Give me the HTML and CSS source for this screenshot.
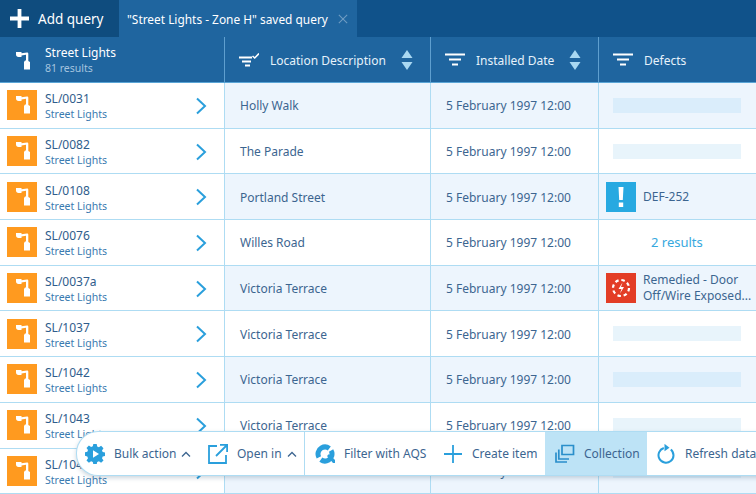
FILE: index.html
```html
<!DOCTYPE html>
<html lang="en">
<head>
<meta charset="utf-8">
<title>Street Lights</title>
<link rel="stylesheet" href="styles.css">
</head>
<body>
<svg class="defs" width="0" height="0" aria-hidden="true">
  <defs>
    <symbol id="lamp" viewBox="0 0 30 30">
      <path d="M9 6h5.500v1.200L20 6.500c.8 0 1.300.5 1.300 1.300V15h-2.300V8.800l-4.500.7V11H11.500C10 11 9 10 9 8.500z" fill="currentColor"/>
      <path d="M18 14.500h2.500l2.500 1.500v7.500h-6V16z" fill="currentColor"/>
    </symbol>
    <symbol id="filter" viewBox="0 0 20 14">
      <path d="M0 1.500h20M4 6.500h12M7 11.500h6" stroke="currentColor" stroke-width="1.800" fill="none"/>
    </symbol>
    <symbol id="sort" viewBox="0 0 12 20">
      <path d="M6 0l5.500 8H.5zM6 20L.5 12h11z" fill="currentColor"/>
    </symbol>
    <symbol id="chev" viewBox="0 0 12 18">
      <path d="M2 1.500L10 9l-8 7.500" fill="none" stroke="currentColor" stroke-width="2"/>
    </symbol>
    <symbol id="up" viewBox="0 0 10 6">
      <path d="M1 5.500L5 1.500l4 4" fill="none" stroke="currentColor" stroke-width="1.300"/>
    </symbol>
  </defs>
</svg>

<div class="app">
  <nav class="tabs">
    <button class="add">
      <svg class="add-icon" viewBox="0 0 20 20"><path d="M10 0v20M0 10h20" stroke="currentColor" stroke-width="4"/></svg>
      Add query
    </button>
    <div class="tab">
      <span>"Street Lights - Zone H" saved query</span>
      <svg class="tab-close" viewBox="0 0 12 12"><path d="M1 1l10 10M11 1L1 11" stroke="currentColor" stroke-width="1.300"/></svg>
    </div>
  </nav>

  <header class="row head">
    <div class="cell first-head">
      <svg class="head-lamp"><use href="#lamp"/></svg>
      <div class="title-stack">
        <span class="title">Street Lights</span>
        <span class="sub">81 results</span>
      </div>
    </div>
    <div class="cell hcell">
      <svg class="ficon" viewBox="0 0 20 14"><path d="M0 4.500h13M3 8.500h9M6 12.500h5" stroke="currentColor" stroke-width="1.800" fill="none"/><path d="M13.500 3l2.200 2L20 .5" stroke="currentColor" stroke-width="1.600" fill="none"/></svg>
      <span class="hlabel">Location Description</span>
      <svg class="sort"><use href="#sort"/></svg>
    </div>
    <div class="cell hcell">
      <svg class="ficon"><use href="#filter"/></svg>
      <span class="hlabel">Installed Date</span>
      <svg class="sort"><use href="#sort"/></svg>
    </div>
    <div class="cell hcell">
      <svg class="ficon"><use href="#filter"/></svg>
      <span class="hlabel">Defects</span>
    </div>
  </header>

  <main class="rows">
    <div class="row odd">
      <div class="cell item"><span class="badge"><svg><use href="#lamp"/></svg></span><div class="id-stack"><span class="id">SL/0031</span><span class="type">Street Lights</span></div><svg class="chev"><use href="#chev"/></svg></div>
      <div class="cell text">Holly Walk</div><div class="cell text">5 February 1997 12:00</div>
      <div class="cell defect"><span class="loading"></span></div>
    </div>
    <div class="row">
      <div class="cell item"><span class="badge"><svg><use href="#lamp"/></svg></span><div class="id-stack"><span class="id">SL/0082</span><span class="type">Street Lights</span></div><svg class="chev"><use href="#chev"/></svg></div>
      <div class="cell text">The Parade</div><div class="cell text">5 February 1997 12:00</div>
      <div class="cell defect"><span class="loading"></span></div>
    </div>
    <div class="row odd">
      <div class="cell item"><span class="badge"><svg><use href="#lamp"/></svg></span><div class="id-stack"><span class="id">SL/0108</span><span class="type">Street Lights</span></div><svg class="chev"><use href="#chev"/></svg></div>
      <div class="cell text">Portland Street</div><div class="cell text">5 February 1997 12:00</div>
      <div class="cell defect found">
        <span class="dbadge blue"><svg viewBox="0 0 30 30"><path d="M12.500 5h5l-.7 13h-3.600zM12.800 20.500h4.400V25h-4.400z" fill="#fff"/></svg></span>
        <span class="dtext">DEF-252</span>
      </div>
    </div>
    <div class="row">
      <div class="cell item"><span class="badge"><svg><use href="#lamp"/></svg></span><div class="id-stack"><span class="id">SL/0076</span><span class="type">Street Lights</span></div><svg class="chev"><use href="#chev"/></svg></div>
      <div class="cell text">Willes Road</div><div class="cell text">5 February 1997 12:00</div>
      <div class="cell defect results">2 results</div>
    </div>
    <div class="row odd">
      <div class="cell item"><span class="badge"><svg><use href="#lamp"/></svg></span><div class="id-stack"><span class="id">SL/0037a</span><span class="type">Street Lights</span></div><svg class="chev"><use href="#chev"/></svg></div>
      <div class="cell text">Victoria Terrace</div><div class="cell text">5 February 1997 12:00</div>
      <div class="cell defect found">
        <span class="dbadge red"><svg viewBox="0 0 30 30"><circle cx="15" cy="15" r="8" fill="none" stroke="#fff" stroke-width="2.200" stroke-dasharray="3.500 2.800"/><path d="M16.500 9.500l-4 6.500h3l-1.500 4.500 4-6.500h-3z" fill="#fff"/></svg></span>
        <span class="dtext">Remedied - Door Off/Wire Exposed...</span>
      </div>
    </div>
    <div class="row">
      <div class="cell item"><span class="badge"><svg><use href="#lamp"/></svg></span><div class="id-stack"><span class="id">SL/1037</span><span class="type">Street Lights</span></div><svg class="chev"><use href="#chev"/></svg></div>
      <div class="cell text">Victoria Terrace</div><div class="cell text">5 February 1997 12:00</div>
      <div class="cell defect"><span class="loading"></span></div>
    </div>
    <div class="row odd">
      <div class="cell item"><span class="badge"><svg><use href="#lamp"/></svg></span><div class="id-stack"><span class="id">SL/1042</span><span class="type">Street Lights</span></div><svg class="chev"><use href="#chev"/></svg></div>
      <div class="cell text">Victoria Terrace</div><div class="cell text">5 February 1997 12:00</div>
      <div class="cell defect"><span class="loading"></span></div>
    </div>
    <div class="row">
      <div class="cell item"><span class="badge"><svg><use href="#lamp"/></svg></span><div class="id-stack"><span class="id">SL/1043</span><span class="type">Street Lights</span></div><svg class="chev"><use href="#chev"/></svg></div>
      <div class="cell text">Victoria Terrace</div><div class="cell text">5 February 1997 12:00</div>
      <div class="cell defect"><span class="loading"></span></div>
    </div>
    <div class="row odd">
      <div class="cell item"><span class="badge"><svg><use href="#lamp"/></svg></span><div class="id-stack"><span class="id">SL/1044</span><span class="type">Street Lights</span></div><svg class="chev"><use href="#chev"/></svg></div>
      <div class="cell text">Victoria Terrace</div><div class="cell text">5 February 1997 12:00</div>
      <div class="cell defect"><span class="loading"></span></div>
    </div>
  </main>

  <div class="toolbar">
    <div class="tool-group first-group">
      <button class="tool bulk">
        <svg class="tool-icon" viewBox="0 0 20 20"><path d="M8.300 0h3.400l.5 2.600 1.700.7 2.200-1.500 2.400 2.400-1.500 2.200.7 1.700 2.300.5v3.400l-2.300.5-.7 1.700 1.500 2.200-2.400 2.400-2.200-1.500-1.700.7-.5 2.300H8.300l-.5-2.300-1.700-.7-2.200 1.500-2.400-2.400 1.500-2.200-.7-1.700L0 11.700V8.300l2.300-.5.7-1.700-1.500-2.200 2.400-2.400 2.200 1.500 1.700-.7z" fill="currentColor"/><path d="M8 6.200l6 3.800-6 3.800z" fill="#fff"/></svg>
        <span>Bulk action</span>
        <svg class="up"><use href="#up"/></svg>
      </button>
      <button class="tool open">
        <svg class="tool-icon" viewBox="0 0 20 20"><path d="M9 2H1v17h17v-8" fill="none" stroke="currentColor" stroke-width="1.800"/><path d="M12 .9h7.100V8M19 1L8 12" fill="none" stroke="currentColor" stroke-width="1.800"/></svg>
        <span>Open in</span>
        <svg class="up"><use href="#up"/></svg>
      </button>
    </div>
    <button class="tool aqs">
      <svg class="tool-icon" viewBox="0 0 20 20"><circle cx="10" cy="10" r="7" fill="none" stroke="currentColor" stroke-width="5" stroke-dasharray="19 3" transform="rotate(-30 10 10)"/><path d="M12 12l6 7h2v-3l-6-6z" fill="currentColor"/></svg>
      <span>Filter with AQS</span>
    </button>
    <button class="tool create">
      <svg class="tool-icon" viewBox="0 0 20 20"><path d="M10 1v18M1 10h18" stroke="currentColor" stroke-width="1.800"/></svg>
      <span>Create item</span>
    </button>
    <button class="tool active">
      <svg class="tool-icon" viewBox="0 0 20 20"><path d="M7 1.500h11.500v9H7z" fill="none" stroke="currentColor" stroke-width="1.700"/><path d="M3.800 5.500v9.500H14" fill="none" stroke="currentColor" stroke-width="1.700"/><path d="M1 8.500v9.500h11" fill="none" stroke="currentColor" stroke-width="1.700"/></svg>
      <span>Collection</span>
    </button>
    <button class="tool refresh">
      <svg class="tool-icon" viewBox="0 0 20 20"><path d="M14.800 5.400A7.500 7.500 0 1 1 7.800 4" fill="none" stroke="currentColor" stroke-width="2"/><path d="M8.500 0v7.500L13.500 4z" fill="currentColor" transform="translate(0 -.2)"/></svg>
      <span>Refresh data</span>
    </button>
  </div>
</div>
</body>
</html>
```

FILE: styles.css
```css
* { box-sizing: border-box; }
html, body { margin: 0; height: 100%; }
body {
  width: 756px;
  height: 494px;
  overflow: hidden;
  font-family: "Noto Sans", "Open Sans", sans-serif;
  color: #2f5d8c;
  background: #fff;
}
.defs { position: absolute; }
button { font: inherit; border: 0; background: none; padding: 0; color: inherit; }

.app { position: relative; width: 756px; height: 494px; overflow: hidden; }

.tabs {
  display: flex;
  height: 37px;
  background: #10528a;
}
.add {
  width: 119px;
  height: 37px;
  display: flex;
  align-items: center;
  gap: 9px;
  padding-left: 10px;
  background: #0f4c7e;
  color: #fff;
  font-size: 13.500px;
}
.add-icon { width: 19px; height: 19px; }
.tab {
  width: 238px;
  display: flex;
  align-items: center;
  padding-left: 8px;
  gap: 10px;
  background: #1f659f;
  color: #fff;
  font-size: 11.900px;
}
.tab-close { width: 10px; height: 10px; color: #6f9cc2; }

.row {
  display: grid;
  grid-template-columns: 225px 206px 168px 157px;
  height: 45.700px;
  border-bottom: 1px solid #aedcf3;
}
.cell {
  display: flex;
  align-items: center;
  min-width: 0;
  border-right: 1px solid #aedcf3;
}
.row.head {
  height: 46px;
  background: #1f659f;
  color: #fff;
  border-bottom: 1px solid #5aa5d6;
}
.row.head .cell { border-right: 1px solid #5f9fcf; }
.row.head .cell:last-child { border-right: 0; }

.first-head { padding-left: 7px; }
.head-lamp { width: 30px; height: 30px; flex: none; color: #fff; margin-top: 2px; }
.title-stack { display: flex; flex-direction: column; margin-left: 8px; margin-top: 1px; }
.title { font-size: 12px; line-height: 16px; }
.sub { font-size: 10.500px; line-height: 14px; color: #a5c4df; }

.hcell { padding-left: 14px; padding-right: 17px; }
.ficon { width: 20px; height: 14px; flex: none; color: #fff; margin-top: 1px; }
.hlabel { margin-left: 11px; font-size: 12px; color: #e6f2fb; flex: 1; white-space: nowrap; margin-top: 1px; }
.sort { width: 12px; height: 20px; flex: none; color: #a9d8f2; }

.odd .cell { background: #edf5fd; }
.odd .item { background: #fff; }

.item { padding-left: 7px; padding-right: 17px; }
.badge {
  width: 30px;
  height: 30px;
  flex: none;
  background: #ff9a1f;
  color: #fff;
}
.badge svg { display: block; width: 30px; height: 30px; }
.id-stack { display: flex; flex-direction: column; margin-left: 8px; flex: 1; padding-top: 2px; }
.id { font-size: 12px; line-height: 16px; color: #2f5d8c; }
.type { font-size: 10.500px; line-height: 14px; color: #3a7ab0; }
.chev { width: 12px; height: 18px; color: #2a9fdc; flex: none; margin-top: 1px; }

.text { padding-left: 15px; font-size: 12px; color: #3c6590; white-space: nowrap; padding-top: 1px; }

.defect { padding-left: 14px; border-right: 0; }
.loading { display: block; width: 128px; height: 15px; background: #daedfb; }
.row:not(.odd) .loading { background: #e8f4fb; }

.found { padding-left: 7px; gap: 7px; }
.dbadge { width: 30px; height: 30px; flex: none; }
.dbadge svg { display: block; width: 30px; height: 30px; }
.blue { background: #27a9e1; }
.red { background: #e33d26; }
.dtext { font-size: 12px; line-height: 16px; color: #3c6590; }
.results { padding-left: 52px; font-size: 13px; color: #36a8de; }

.toolbar {
  position: absolute;
  left: 76px;
  top: 431px;
  width: 700px;
  height: 45px;
  display: flex;
  align-items: stretch;
  background: #fff;
  border: 1px solid #aedcf3;
  border-right: 0;
  border-radius: 22px 0 0 22px;
  box-shadow: 0 2px 4px rgba(60, 90, 120, .25);
}
.tool-group {
  display: flex;
  width: 228px;
  flex: none;
  border-right: 1px solid #aedcf3;
}
.tool {
  display: flex;
  align-items: center;
  height: 100%;
  flex: none;
  font-size: 12px;
  color: #3c6590;
  white-space: nowrap;
}
.tool-icon { width: 20px; height: 20px; flex: none; color: #2a9fdc; }
.tool span { margin-left: 9px; }
.up { width: 10px; height: 6px; margin-left: 5px; color: #3c6590; }
.bulk { padding-left: 8px; width: 130px; }
.open { padding-left: 1px; width: 98px; }
.aqs { padding-left: 10px; width: 130px; }
.create { padding-left: 8px; width: 110px; }
.active { width: 102px; padding-left: 10px; background: #bde3f6; }
.active .tool-icon { color: #2a8fcb; }
.refresh { padding-left: 9px; }
```
